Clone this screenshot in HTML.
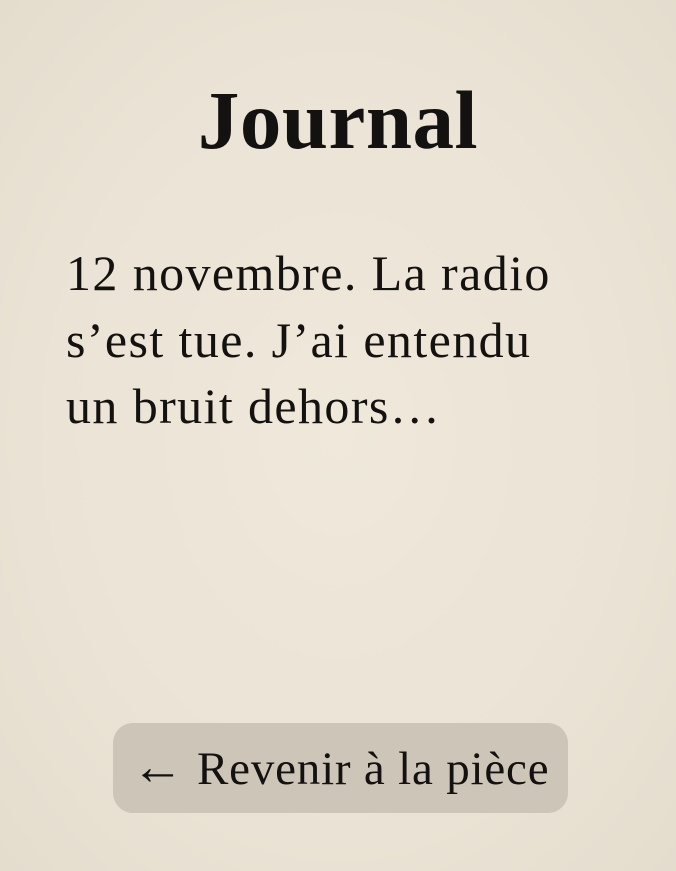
<!DOCTYPE html>
<html><head><meta charset="utf-8"><style>
html,body{margin:0;padding:0}
body{width:676px;height:871px;background:#ebe3d6;font-family:"Liberation Serif",serif;color:#141210;position:relative;overflow:hidden;
background-image:radial-gradient(ellipse at center,#efe8db 0%,#ebe3d5 60%,#e4dccd 100%)}
h1{position:absolute;left:0;right:0;top:72px;margin:0;text-align:center;font-size:83px;font-weight:bold;line-height:96px;letter-spacing:0.5px}
.p{position:absolute;left:66px;top:240px;font-size:50px;line-height:66.5px;white-space:nowrap;letter-spacing:1.4px}
.btn{position:absolute;left:113px;top:723px;width:455px;height:90px;border-radius:20px;background:#cdc5b7;font-size:47px;line-height:90px;text-align:center;white-space:nowrap;letter-spacing:0.8px}
.btn span{font-size:52px}
</style></head><body>
<h1>Journal</h1>
<div class="p">12 novembre. La radio<br>s’est tue. J’ai entendu<br>un bruit dehors…</div>
<div class="btn"><span>←</span> Revenir à la pièce</div>
</body></html>
